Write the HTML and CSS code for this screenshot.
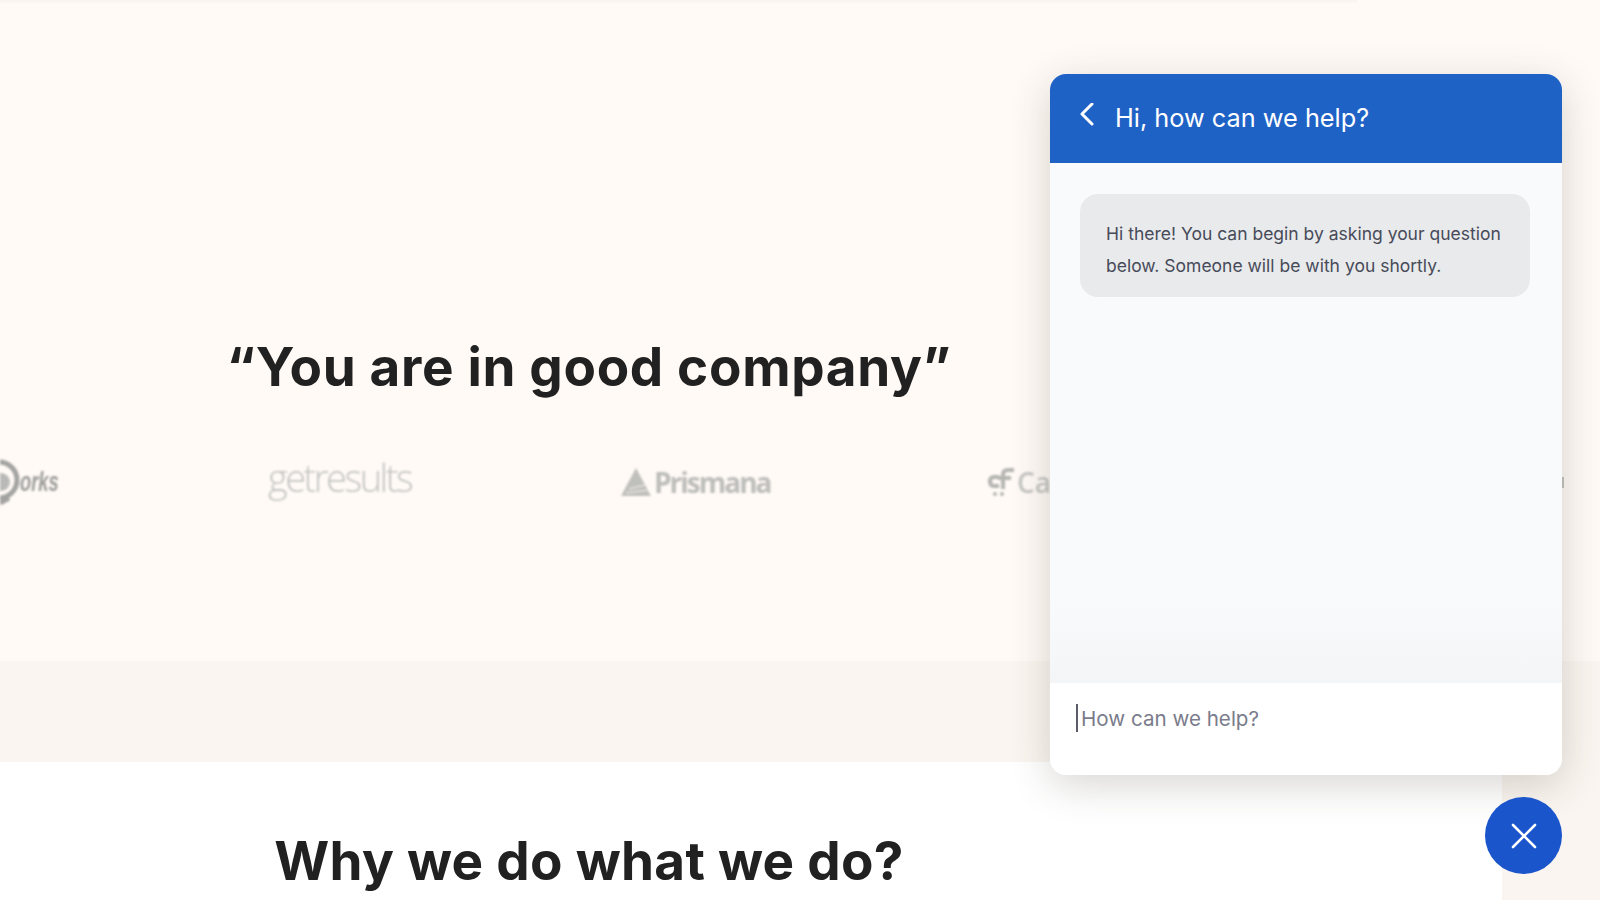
FILE: index.html
```html
<!DOCTYPE html>
<html lang="en">
<head>
  <meta charset="UTF-8">
  <title>Why we do what we do</title>
  <link rel="stylesheet" href="styles.css">
</head>
<body>
  <div class="topline"></div>
  <section class="hero">
    <h2 class="title">“You are in good company”</h2>
    <div class="logos">
      <div class="logo logo-works">
        <svg width="24" height="50" viewBox="0 0 24 50">
          <circle cx="-1" cy="23" r="18" fill="none" stroke="#a3a3a1" stroke-width="5"/>
          <circle cx="1" cy="25" r="9" fill="#b9b9b7"/>
          <path d="M0 46 L9 41" stroke="#a3a3a1" stroke-width="5" fill="none"/>
        </svg>
        <span>orks</span>
      </div>
      <div class="logo logo-getresults">getresults</div>
      <div class="logo logo-prismana">
        <svg width="32" height="29" viewBox="0 0 32 29">
          <path d="M16 0 L31 28 H1 Z" fill="#bfbfbc"/>
          <path d="M9 21 L25 17 M6 25 L28 22" stroke="#e4e3e0" stroke-width="1.5"/>
        </svg>
        <span>Prismana</span>
      </div>
      <div class="logo logo-cart">
        <svg width="28" height="30" viewBox="0 0 28 30">
          <path d="M12 10 H7 Q3 10 3 14.500 Q3 19 7 19 H12" fill="none" stroke="#b5b5b2" stroke-width="4"/>
          <path d="M27 3 H21 Q16 3 16 8 V22 M11 11 H24" fill="none" stroke="#b5b5b2" stroke-width="4"/>
          <circle cx="8" cy="27" r="2" fill="#b5b5b2"/>
          <circle cx="15" cy="27" r="2" fill="#b5b5b2"/>
        </svg>
        <span>Cart</span>
      </div>
    </div>
  </section>
  <div class="band"></div>
  <section class="lower">
    <div class="lower-main">
      <h2 class="title title-why">Why we do what we do?</h2>
    </div>
  </section>

  <div class="logo-peek"></div>

  <div class="chat">
    <div class="chat-head">
      <svg width="18" height="28" viewBox="0 0 18 28">
        <path d="M14 1 L4 11 L14 21" fill="none" stroke="#fff" stroke-width="3" stroke-linecap="round" stroke-linejoin="round"/>
      </svg>
      <span>Hi, how can we help?</span>
    </div>
    <div class="chat-body">
      <div class="bubble">Hi there! You can begin by asking your question below. Someone will be with you shortly.</div>
    </div>
    <div class="chat-input">
      <span class="caret"></span>
      <span>How can we help?</span>
    </div>
  </div>

  <button class="chat-close">
    <svg width="28" height="28" viewBox="0 0 28 28">
      <path d="M3 3 L25 25 M25 3 L3 25" fill="none" stroke="#fff" stroke-width="2.6" stroke-linecap="round"/>
    </svg>
  </button>
</body>
</html>
```

FILE: styles.css
```css
html, body {
  height: 900px;
}
body {
  margin: 0;
  background: #fffaf6;
  font-family: "Inter", sans-serif;
  overflow: hidden;
}
.topline {
  width: 1357px;
  height: 4px;
  background: linear-gradient(#f8f3ef, #fffaf6);
}
.hero {
  height: 657px;
  width: 1178px;
  padding-top: 327px;
  box-sizing: border-box;
}
.title {
  margin: 0;
  text-align: center;
  font-family: "Inter", sans-serif;
  font-size: 53px;
  font-weight: 700;
  line-height: 72px;
  letter-spacing: 0.67px;
  color: #212121;
}
.title-why {
  letter-spacing: 0.3px;
}
.logos {
  display: flex;
  align-items: center;
  height: 60px;
  margin-top: 49px;
  filter: blur(0.8px);
}
.logo {
  display: flex;
  align-items: center;
  flex: none;
}
.logo-works {
  width: 268px;
  color: #9c9c9a;
  font: italic 700 27px "Liberation Sans", sans-serif;
}
.logo-works span {
  margin-left: -4px;
  transform: scaleX(0.68);
  transform-origin: left center;
}
.logo-getresults {
  width: 352px;
  margin-top: -10px;
  color: #c4c4c2;
  font: 300 38px "Open Sans", sans-serif;
  letter-spacing: -2.5px;
}
.logo-prismana {
  width: 367px;
  gap: 2px;
  color: #bdbdba;
  font: 700 28px "Open Sans", sans-serif;
  letter-spacing: -2px;
}
.logo-cart {
  gap: 2px;
  color: #c6c6c3;
  font: 600 28px "Open Sans", sans-serif;
}
.band {
  height: 101px;
  background: #faf5f0;
}
.lower {
  height: 138px;
  background: #faf5f0;
}
.lower-main {
  width: 1502px;
  height: 138px;
  padding-top: 63px;
  box-sizing: border-box;
  background: #fff;
}
.lower-main .title {
  width: 1178px;
}
.logo-peek {
  position: absolute;
  top: 477px;
  left: 1562px;
  width: 2px;
  height: 11px;
  background: #c4c4c2;
  filter: blur(0.6px);
}
.chat {
  position: absolute;
  top: 74px;
  left: 1050px;
  width: 512px;
  height: 701px;
  display: flex;
  flex-direction: column;
  border-radius: 16px;
  overflow: hidden;
  background: #f9fafc;
  box-shadow: 0 10px 40px rgba(60, 50, 40, 0.2);
}
.chat-head {
  display: flex;
  align-items: center;
  gap: 19px;
  height: 89px;
  padding: 0 0 3px 28px;
  box-sizing: border-box;
  background: #1f62c6;
  color: #fff;
  font-size: 25.3px;
}
.chat-body {
  flex: 1;
  padding: 31px 32px 0 30px;
  background: linear-gradient(#f9fafc 85%, #f4f5f7);
}
.bubble {
  padding: 24px 24px 15px 26px;
  border-radius: 18px;
  background: #e9eaec;
  color: #474a59;
  font-size: 17.5px;
  line-height: 32px;
}
.chat-input {
  display: flex;
  align-items: flex-start;
  height: 92px;
  padding: 21px 26px 0;
  box-sizing: border-box;
  background: #fff;
  color: #7a7c8b;
  font-size: 20.6px;
  line-height: 30px;
}
.caret {
  width: 2px;
  height: 28px;
  margin-right: 3px;
  background: #5a5c6a;
}
.chat-close {
  position: absolute;
  top: 797px;
  left: 1485px;
  width: 77px;
  height: 77px;
  display: flex;
  align-items: center;
  justify-content: center;
  padding: 0;
  border: none;
  border-radius: 50%;
  background: #1b55cc;
}
```
